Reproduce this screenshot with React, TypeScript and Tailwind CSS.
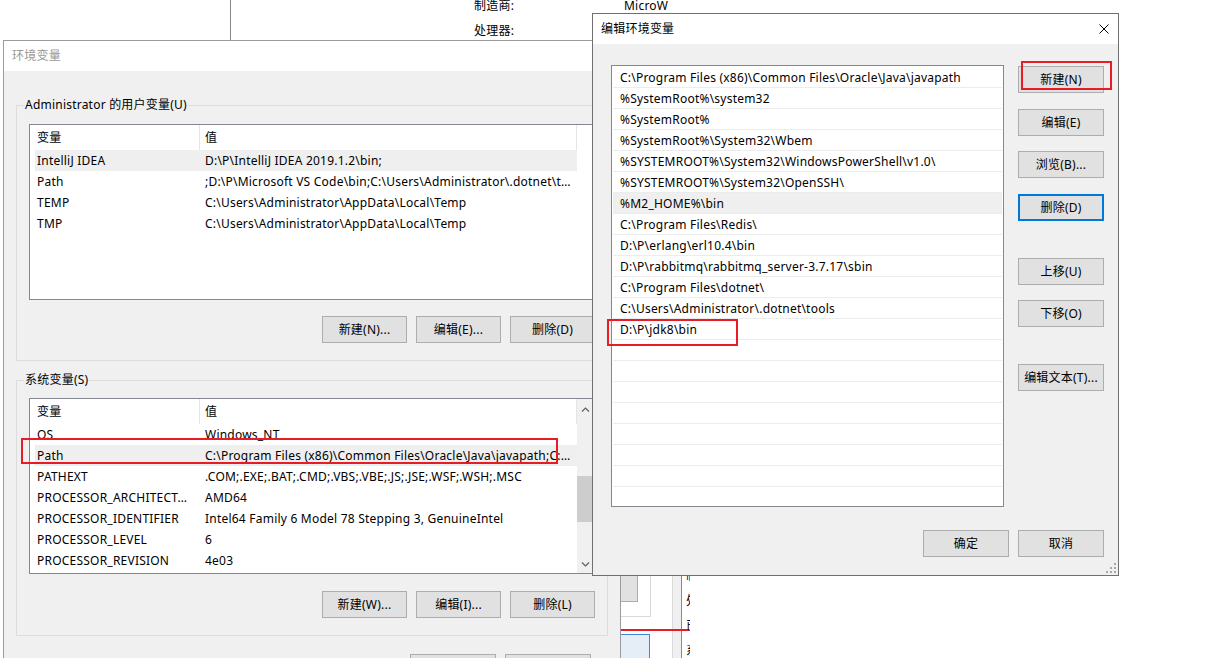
import type { ReactNode } from 'react'

type Row = { name: string; value: string; sel?: boolean }

const userVars: Row[] = [
    { name: 'IntelliJ IDEA', value: 'D:\\P\\IntelliJ IDEA 2019.1.2\\bin;', sel: true },
    { name: 'Path', value: ';D:\\P\\Microsoft VS Code\\bin;C:\\Users\\Administrator\\.dotnet\\t…' },
    { name: 'TEMP', value: 'C:\\Users\\Administrator\\AppData\\Local\\Temp' },
    { name: 'TMP', value: 'C:\\Users\\Administrator\\AppData\\Local\\Temp' },
]

const sysVars: Row[] = [
    { name: 'OS', value: 'Windows_NT' },
    { name: 'Path', value: 'C:\\Program Files (x86)\\Common Files\\Oracle\\Java\\javapath;C:…', sel: true },
    { name: 'PATHEXT', value: '.COM;.EXE;.BAT;.CMD;.VBS;.VBE;.JS;.JSE;.WSF;.WSH;.MSC' },
    { name: 'PROCESSOR_ARCHITECT…', value: 'AMD64' },
    { name: 'PROCESSOR_IDENTIFIER', value: 'Intel64 Family 6 Model 78 Stepping 3, GenuineIntel' },
    { name: 'PROCESSOR_LEVEL', value: '6' },
    { name: 'PROCESSOR_REVISION', value: '4e03' },
]

const paths = [
    'C:\\Program Files (x86)\\Common Files\\Oracle\\Java\\javapath',
    '%SystemRoot%\\system32',
    '%SystemRoot%',
    '%SystemRoot%\\System32\\Wbem',
    '%SYSTEMROOT%\\System32\\WindowsPowerShell\\v1.0\\',
    '%SYSTEMROOT%\\System32\\OpenSSH\\',
    '%M2_HOME%\\bin',
    'C:\\Program Files\\Redis\\',
    'D:\\P\\erlang\\erl10.4\\bin',
    'D:\\P\\rabbitmq\\rabbitmq_server-3.7.17\\sbin',
    'C:\\Program Files\\dotnet\\',
    'C:\\Users\\Administrator\\.dotnet\\tools',
    'D:\\P\\jdk8\\bin',
    '', '', '', '', '', '', '', '',
]

function Btn({ children, wide, focus }: { children: ReactNode; wide?: boolean; focus?: boolean }) {
    return (
        <button
            className={
                (wide ? 'w-[86px] ' : 'w-[85px] ') +
                (focus ? 'border-2 border-[#0078d7] ' : 'border border-[#adadad] ') +
                'flex h-[27px] shrink-0 items-center justify-center bg-[#e1e1e1] text-black'
            }
        >
            {children}
        </button>
    )
}

function Chevron({ down }: { down?: boolean }) {
    return (
        <svg width="9" height="5" viewBox="0 0 9 5">
            <path d={down ? 'M1 0.5 L4.5 4 L8 0.5' : 'M1 4.5 L4.5 1 L8 4.5'} stroke="#606060" strokeWidth="1.2" fill="none" />
        </svg>
    )
}

function VarList({ rows, scroll }: { rows: Row[]; scroll?: boolean }) {
    return (
        <div className="flex h-[176px] w-[566px] border border-[#828790] bg-white">
            <div className="flex w-[547px] flex-col overflow-hidden">
                <div className="flex h-[25px] shrink-0">
                    <div className="flex w-[170px] items-center border-r border-[#e5e5e5] pl-[7px]">变量</div>
                    <div className="flex w-[377px] items-center border-r border-[#e5e5e5] pl-[5px]">值</div>
                </div>
                {rows.map((r) => (
                    <div key={r.name} className={'ml-[5px] flex h-[21px] shrink-0 items-center ' + (r.sel ? 'bg-[#efefef]' : '')}>
                        <div className="w-[164px] overflow-hidden whitespace-nowrap pl-[2px]">{r.name}</div>
                        <div className="w-[378px] overflow-hidden whitespace-nowrap pl-[6px]">{r.value}</div>
                    </div>
                ))}
            </div>
            {scroll && (
                <div className="flex w-[17px] flex-col bg-[#f0f0f0]">
                    <div className="flex h-[17px] items-center justify-center pt-[3px]">
                        <Chevron />
                    </div>
                    <div className="flex flex-1 flex-col">
                        <div className="mt-[60px] h-[46px] bg-[#cdcdcd]" />
                    </div>
                    <div className="flex h-[17px] items-center justify-center">
                        <Chevron down />
                    </div>
                </div>
            )}
        </div>
    )
}

export default function App() {
    return (
        <div className="relative h-[658px] w-[1206px] overflow-hidden bg-white text-[12px] tracking-[0.22px] text-black font-['Noto_Sans','Noto_Sans_CJK_SC',sans-serif]">
            {/* window behind everything */}
            <div className="absolute left-[230px] top-0 h-[40px] w-px bg-[#8a8a8a]" />
            <div className="absolute left-[474px] top-[-3px] flex flex-col gap-[7px] leading-[18px]">
                <span>制造商:</span>
                <span>处理器:</span>
            </div>
            <span className="absolute left-[624px] top-[-3px] leading-[18px]">MicroW</span>

            <div className="absolute left-[620px] top-[560px] h-[57px] w-[31px] border border-[#d9d9d9]" />
            <div className="absolute left-[620px] top-[560px] h-[42px] w-[18px] border border-[#adadad] bg-[#e1e1e1]" />
            <div className="absolute left-[672px] top-[560px] h-[100px] w-[10px] border-l border-r border-l-[#dadada] border-r-[#8a8a8a] bg-[#f0f0f0]" />
            <div className="absolute left-[620px] top-[634px] h-[40px] w-[30px] border border-[#3c8ad6] bg-[#e5eef7]" />
            <div className="absolute left-[620px] top-[629px] h-[2px] w-[69px] bg-[#e81c24]" />
            <div className="absolute left-[686px] top-[563px] flex w-[4px] flex-col overflow-hidden leading-[25px]">
                <span>制</span>
                <span>处</span>
                <span>已</span>
                <span>系</span>
            </div>

            {/* 环境变量 */}
            <div className="absolute left-[3px] top-[40px] flex h-[640px] w-[618px] flex-col border border-[#9b9b9b] bg-[#f0f0f0]">
                <div className="flex h-[30px] shrink-0 items-center bg-white pl-[8px] text-[#999]">环境变量</div>

                <fieldset className="mx-[12px] mt-[26px] border border-[#dcdcdc]">
                    <legend className="ml-[7px] px-[1px] leading-[16px]">Administrator 的用户变量(U)</legend>
                    <div className="px-[12px] pb-[17px] pt-[11px]">
                        <VarList rows={userVars} />
                        <div className="mt-[16px] flex justify-end gap-[9px]">
                            <Btn>新建(N)...</Btn>
                            <Btn>编辑(E)...</Btn>
                            <Btn>删除(D)</Btn>
                        </div>
                    </div>
                </fieldset>

                <fieldset className="mx-[12px] mt-[11px] border border-[#dcdcdc]">
                    <legend className="ml-[7px] px-[1px] leading-[16px]">系统变量(S)</legend>
                    <div className="px-[12px] pb-[17px] pt-[10px]">
                        <VarList rows={sysVars} scroll />
                        <div className="mt-[17px] flex justify-end gap-[9px]">
                            <Btn>新建(W)...</Btn>
                            <Btn>编辑(I)...</Btn>
                            <Btn>删除(L)</Btn>
                        </div>
                    </div>
                </fieldset>

                <div className="mt-[18px] flex justify-end gap-[9px] pr-[29px]">
                    <Btn wide>确定</Btn>
                    <Btn wide>取消</Btn>
                </div>
            </div>

            {/* 编辑环境变量 */}
            <div className="absolute left-[592px] top-[13px] flex h-[563px] w-[527px] flex-col border border-[#707070] bg-[#f0f0f0]">
                <div className="flex h-[30px] shrink-0 items-center justify-between bg-white pl-[8px] pr-[9px]">
                    <span>编辑环境变量</span>
                    <svg width="10" height="10" viewBox="0 0 10 10">
                        <path d="M0.5 0.5 L9.5 9.5 M9.5 0.5 L0.5 9.5" stroke="#000" strokeWidth="1" />
                    </svg>
                </div>
                <div className="flex pl-[18px] pt-[21px]">
                    <div className="flex h-[442px] w-[393px] flex-col overflow-hidden border border-[#828790] bg-white px-[1px] pt-[1px]">
                        {paths.map((p, i) => (
                            <div
                                key={i}
                                className={
                                    'flex h-[21px] shrink-0 items-center whitespace-nowrap border-b border-[#ececec] pl-[7px] pt-[1px] ' +
                                    (i === 6 ? 'bg-[#efefef]' : '')
                                }
                            >
                                {p}
                            </div>
                        ))}
                    </div>
                    <div className="ml-[14px] flex flex-col pt-[1px]">
                        <Btn wide>新建(N)</Btn>
                        <div className="mt-[16px]">
                            <Btn wide>编辑(E)</Btn>
                        </div>
                        <div className="mt-[15px]">
                            <Btn wide>浏览(B)...</Btn>
                        </div>
                        <div className="mt-[16px]">
                            <Btn wide focus>删除(D)</Btn>
                        </div>
                        <div className="mt-[37px]">
                            <Btn wide>上移(U)</Btn>
                        </div>
                        <div className="mt-[15px]">
                            <Btn wide>下移(O)</Btn>
                        </div>
                        <div className="mt-[37px]">
                            <Btn wide>编辑文本(T)...</Btn>
                        </div>
                    </div>
                </div>
                <div className="mt-[23px] flex justify-end gap-[9px] pr-[14px]">
                    <Btn wide>确定</Btn>
                    <Btn wide>取消</Btn>
                </div>
                <svg className="absolute bottom-[2px] right-[2px]" width="10" height="10" viewBox="0 0 10 10">
                    <rect x="8" y="0" width="2" height="2" fill="#a8a8a8" />
                    <rect x="4" y="4" width="2" height="2" fill="#a8a8a8" />
                    <rect x="8" y="4" width="2" height="2" fill="#a8a8a8" />
                    <rect x="0" y="8" width="2" height="2" fill="#a8a8a8" />
                    <rect x="4" y="8" width="2" height="2" fill="#a8a8a8" />
                    <rect x="8" y="8" width="2" height="2" fill="#a8a8a8" />
                </svg>
            </div>

            {/* red annotation boxes */}
            <div className="absolute left-[1021px] top-[61px] h-[29px] w-[91px] border-2 border-[#e81c24]" />
            <div className="absolute left-[607px] top-[319px] h-[27px] w-[131px] border-2 border-[#e81c24]" />
            <div className="absolute left-[21px] top-[438px] h-[26px] w-[537px] border-2 border-[#e81c24]" />
        </div>
    )
}
